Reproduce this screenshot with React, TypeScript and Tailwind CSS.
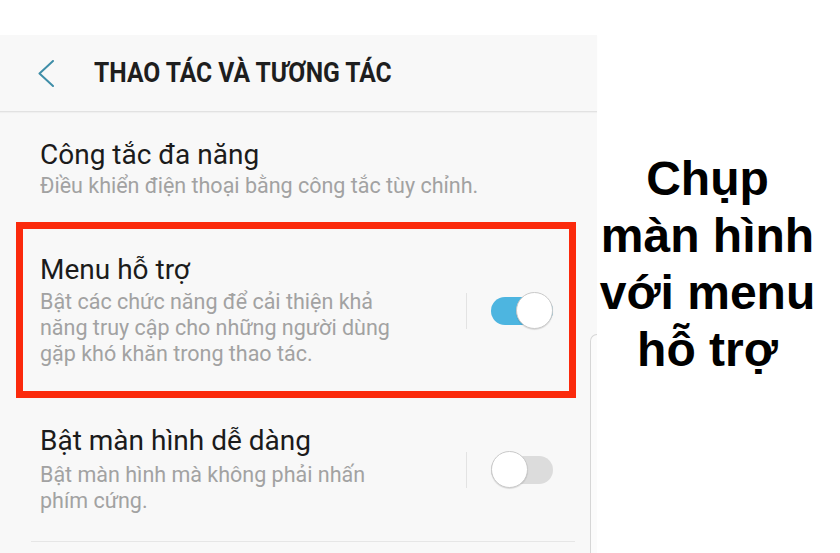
import React from 'react';

function Toggle({ on }: { on: boolean }) {
  return (
    <div className="w-[62px] h-[36px] flex items-center shrink-0">
      <div
        className={
          on
            ? 'w-full h-[28px] rounded-full bg-[#4db5e0] flex items-center justify-end'
            : 'w-full h-[28px] rounded-full bg-[#dcdcdc] flex items-center justify-start'
        }
      >
        <div className="w-[37px] h-[37px] shrink-0 rounded-full bg-white border-[1.5px] border-[#c9c9c9] shadow-[0_1px_1px_rgba(0,0,0,0.12)]" />
      </div>
    </div>
  );
}

function Divider() {
  return <div className="w-px h-[36px] bg-[#e3e3e3] shrink-0" />;
}

export default function App() {
  return (
    <div className="w-[840px] h-[553px] bg-white flex overflow-hidden font-['Roboto',sans-serif]">
      <div className="w-[597px] shrink-0 flex flex-col pt-[35px]">
        <div className="flex-1 bg-[#f8f8f8] flex flex-col">
          {/* header */}
          <div className="h-[77px] shrink-0 flex items-center pl-[38px] border-b border-[#e2e2e2] shadow-[0_1px_1px_rgba(0,0,0,0.03)]">
            <svg width="16" height="27" viewBox="0 0 16 27" fill="none" className="shrink-0">
              <polyline
                points="15,1 1.5,13.5 15,26"
                stroke="#3f8ea8"
                strokeWidth="2"
                strokeLinecap="round"
                strokeLinejoin="round"
              />
            </svg>
            <h1 className="ml-[40px] whitespace-nowrap origin-left scale-x-[0.88] text-[28px] font-bold text-[#1e1e1e]">
              THAO TÁC VÀ TƯƠNG TÁC
            </h1>
          </div>

          <div className="flex-1 flex">
            <div className="w-[590px] flex flex-col">
              {/* item 1 */}
              <div className="pl-[40px] pt-[27px]">
                <p className="text-[28px] leading-[32px] text-[#1b1b1b]">Công tắc đa năng</p>
                <p className="mt-[2px] text-[21.5px] leading-[26px] text-[#a2a2a2]">
                  Điều khiển điện thoại bằng công tắc tùy chỉnh.
                </p>
              </div>

              {/* item 2 (highlighted) */}
              <div className="mt-[23px] ml-[16px] mr-[14px] border-[7px] border-[#fb2a0c] pl-[17px] pr-[16px] pt-[25px] pb-[24px] flex items-center">
                <div className="flex-1">
                  <p className="text-[28px] leading-[32px] text-[#1b1b1b]">Menu hỗ trợ</p>
                  <p className="mt-[3px] text-[21.5px] leading-[26px] text-[#a2a2a2] whitespace-nowrap">
                    Bật các chức năng để cải thiện khả
                    <br />
                    năng truy cập cho những người dùng
                    <br />
                    gặp khó khăn trong thao tác.
                  </p>
                </div>
                <Divider />
                <div className="ml-[24px]">
                  <Toggle on />
                </div>
              </div>

              {/* item 3 */}
              <div className="mt-[27px] pl-[40px] pr-[37px] flex items-center">
                <div className="flex-1">
                  <p className="text-[28px] leading-[32px] text-[#1b1b1b]">Bật màn hình dễ dàng</p>
                  <p className="mt-[5px] text-[21.5px] leading-[26px] text-[#a2a2a2] whitespace-nowrap">
                    Bật màn hình mà không phải nhấn
                    <br />
                    phím cứng.
                  </p>
                </div>
                <Divider />
                <div className="ml-[24px]">
                  <Toggle on={false} />
                </div>
              </div>

              <div className="mt-[27px] ml-[31px] mr-[15px] h-px bg-[#e6e6e6]" />
            </div>

            {/* right edge strip */}
            <div className="w-[7px] flex flex-col">
              <div className="h-[222px] shrink-0" />
              <div className="flex-1 border-l border-t border-[#d6d6d6] rounded-tl-[7px] bg-[#fbfbfb]" />
            </div>
          </div>
        </div>
      </div>

      <div className="flex-1 pr-[22px] pt-[150px] flex justify-center">
        <p className="text-center whitespace-nowrap font-['Liberation_Sans',Arial,sans-serif] font-bold text-[48px] leading-[57px] text-black">
          Chụp
          <br />
          màn hình
          <br />
          với menu
          <br />
          hỗ trợ
        </p>
      </div>
    </div>
  );
}
